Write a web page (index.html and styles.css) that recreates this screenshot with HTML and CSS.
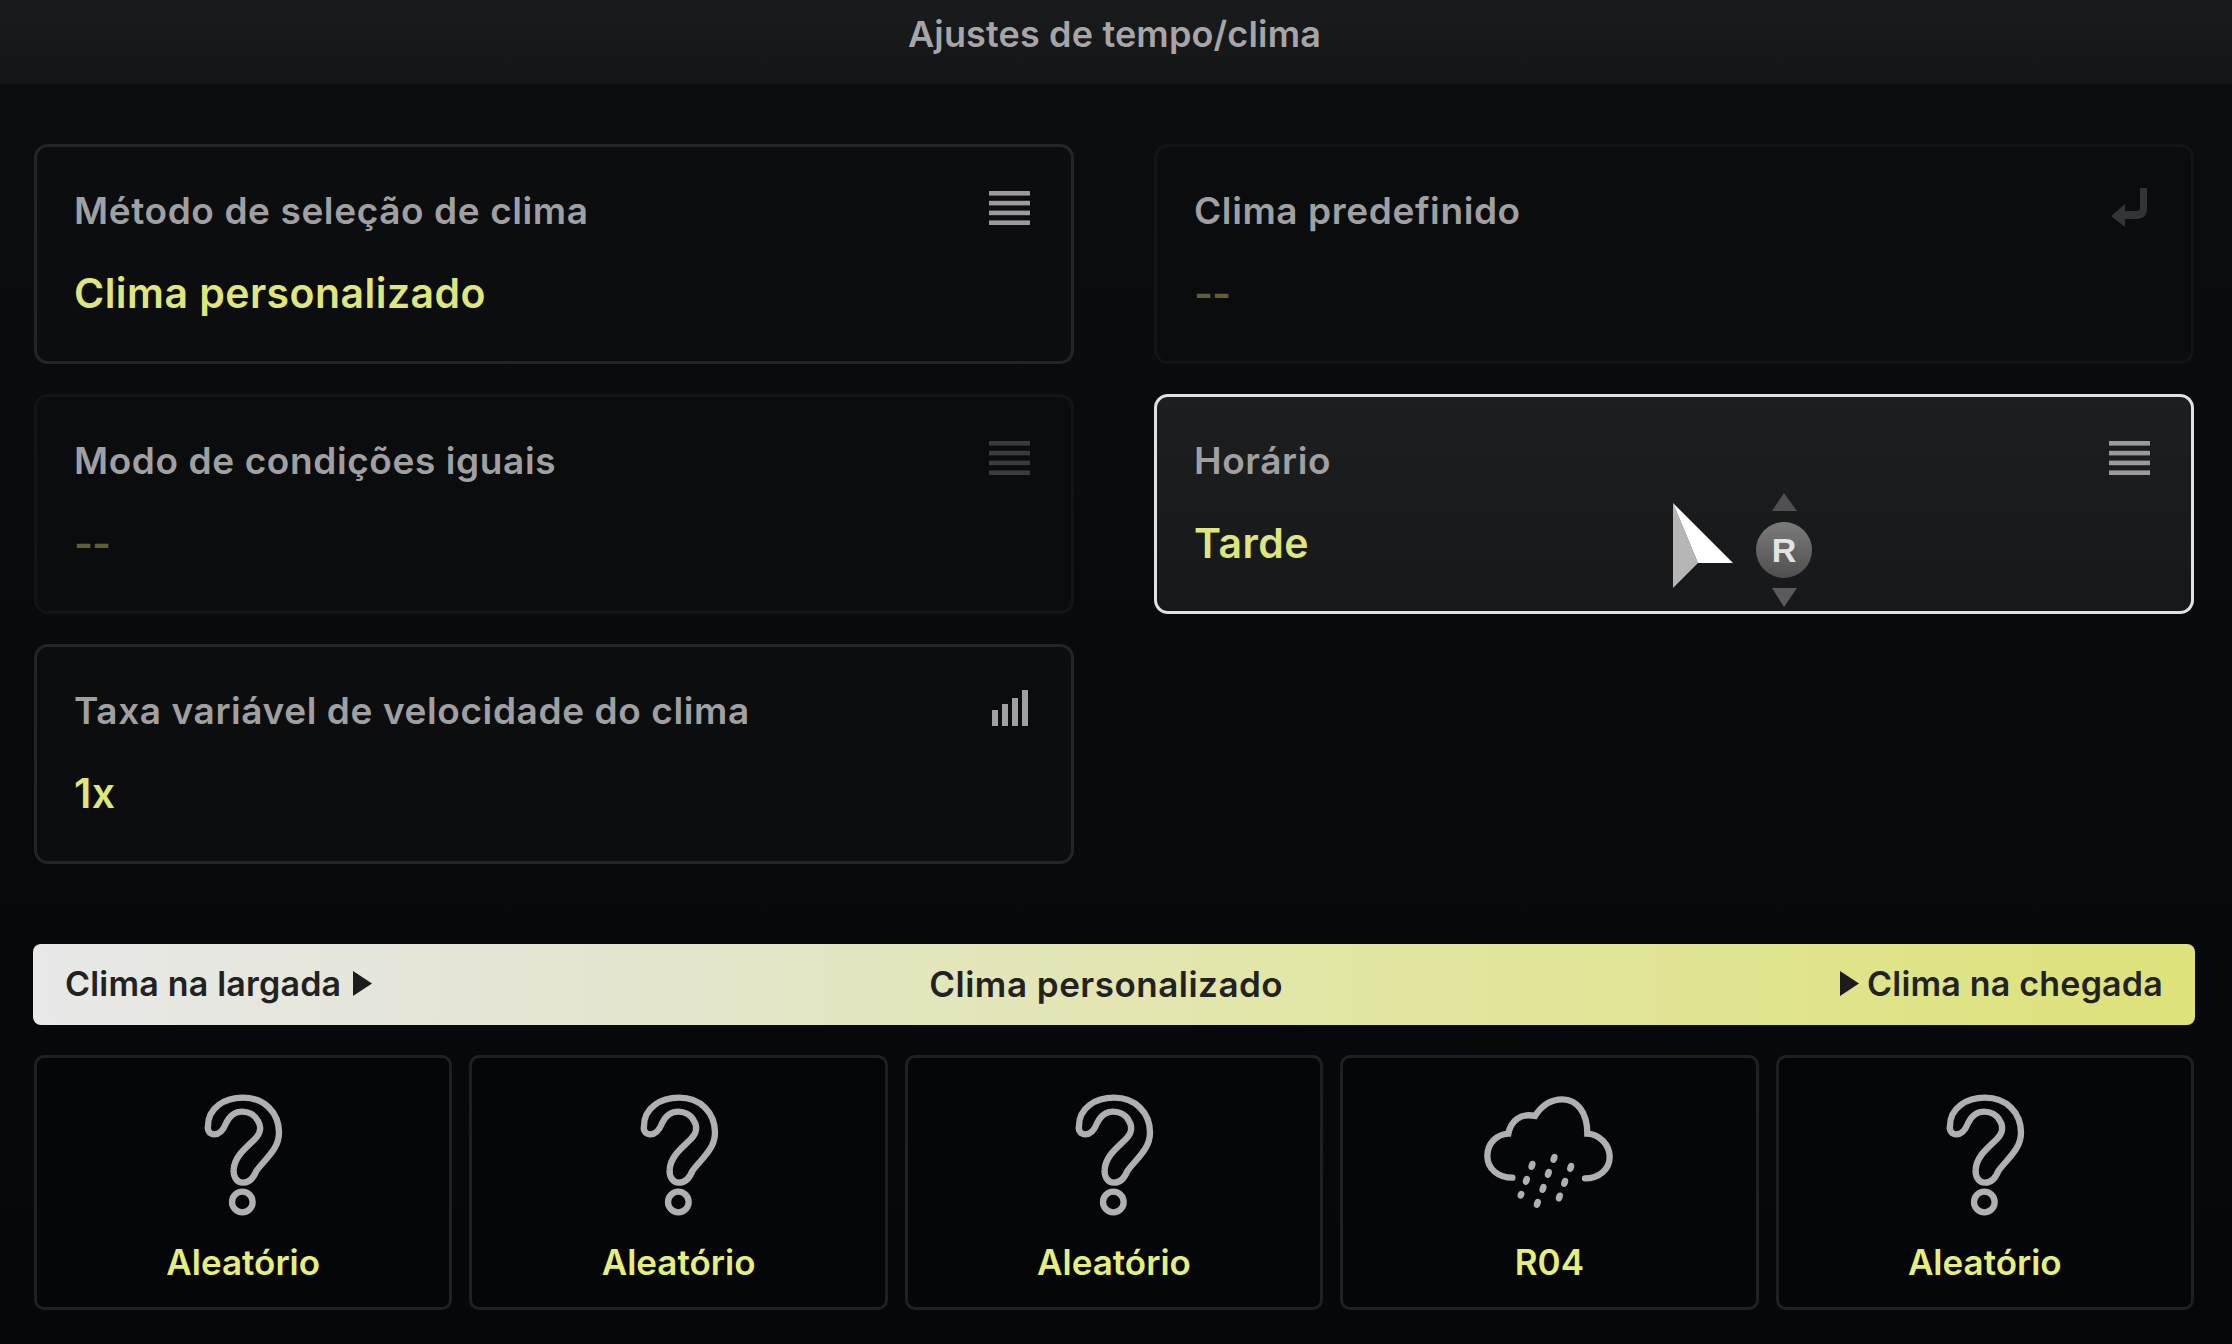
FILE: index.html
```html
<!DOCTYPE html>
<html lang="pt">
<head>
  <meta charset="UTF-8" />
  <title>Ajustes de tempo/clima</title>
  <link rel="stylesheet" href="styles.css">
</head>
<body>
  <svg class="defs" width="0" height="0">
    <symbol id="icon-list" viewBox="0 0 41 34">
      <rect x="0" y="0" width="41" height="4.6" />
      <rect x="0" y="9.8" width="41" height="4.6" />
      <rect x="0" y="19.6" width="41" height="4.6" />
      <rect x="0" y="29.4" width="41" height="4.6" />
    </symbol>
    <symbol id="icon-question" viewBox="-20 0 600 480">
      <path class="outline" d="M175 165C175 110 225 80 280 80C345 80 388 125 388 185C388 235 345 265 320 300C310 325 295 335 280 335C260 335 250 315 252 295C255 255 290 230 315 205C335 185 335 165 325 150C315 130 295 122 278 122C255 122 240 135 230 155C222 175 210 190 195 190C180 190 172 178 175 165Z" />
      <circle class="outline" cx="278" cy="393" r="31" />
    </symbol>
    <symbol id="icon-rain" viewBox="0 0 600 480">
      <path class="outline" d="M190 320C150 320 115 295 115 255C115 215 145 190 178 188C185 150 215 125 258 135C280 100 310 85 340 85C385 85 415 125 415 188C450 190 482 220 482 258C482 295 450 322 408 322" />
      <g class="drops">
        <ellipse cx="249" cy="283" rx="10" ry="14" transform="rotate(20 249 283)" />
        <ellipse cx="315" cy="262" rx="10" ry="14" transform="rotate(20 315 262)" />
        <ellipse cx="365" cy="289" rx="10" ry="14" transform="rotate(20 365 289)" />
        <ellipse cx="298" cy="307" rx="10" ry="14" transform="rotate(20 298 307)" />
        <ellipse cx="232" cy="328" rx="10" ry="14" transform="rotate(20 232 328)" />
        <ellipse cx="347" cy="334" rx="10" ry="14" transform="rotate(20 347 334)" />
        <ellipse cx="282" cy="352" rx="10" ry="14" transform="rotate(20 282 352)" />
        <ellipse cx="216" cy="371" rx="10" ry="12" transform="rotate(20 216 371)" />
        <ellipse cx="331" cy="378" rx="10" ry="14" transform="rotate(20 331 378)" />
        <ellipse cx="265" cy="397" rx="10" ry="14" transform="rotate(20 265 397)" />
      </g>
    </symbol>
  </svg>

  <header class="title-bar">Ajustes de tempo/clima</header>

  <main class="settings">
    <div class="setting">
      <div class="setting-head">
        <span class="setting-label">Método de seleção de clima</span>
        <svg class="icon-list"><use href="#icon-list" /></svg>
      </div>
      <div class="setting-value">Clima personalizado</div>
    </div>

    <div class="setting off">
      <div class="setting-head">
        <span class="setting-label">Clima predefinido</span>
        <svg class="icon-return" viewBox="0 0 36 39"><path d="M29 0h7v20q0 11-11 11H14v8L0 28 14 16v7h12q3 0 3-3z" /></svg>
      </div>
      <div class="setting-value">--</div>
    </div>

    <div class="setting off">
      <div class="setting-head">
        <span class="setting-label">Modo de condições iguais</span>
        <svg class="icon-list"><use href="#icon-list" /></svg>
      </div>
      <div class="setting-value">--</div>
    </div>

    <div class="setting focus">
      <div class="setting-head">
        <span class="setting-label">Horário</span>
        <svg class="icon-list"><use href="#icon-list" /></svg>
      </div>
      <div class="setting-value">Tarde</div>

      <svg class="pointer" viewBox="0 0 145 120" width="145" height="120">
        <polygon class="pointer-shade" points="4,10 29,70 4,95" />
        <polygon class="pointer-light" points="4,10 64,70 29,70" />
        <polygon class="arrow-up" points="103,18 115,0 128,18" />
        <polygon class="arrow-down" points="103,95 128,95 115,114" />
        <defs>
          <linearGradient id="badge" x1="0" y1="0" x2="0" y2="1">
            <stop offset="0" stop-color="#7c7c7c" />
            <stop offset="1" stop-color="#4f4f4f" />
          </linearGradient>
        </defs>
        <circle cx="115" cy="57" r="28" fill="url(#badge)" />
        <text class="pointer-key" x="115" y="69" text-anchor="middle">R</text>
      </svg>
    </div>

    <div class="setting">
      <div class="setting-head">
        <span class="setting-label">Taxa variável de velocidade do clima</span>
        <svg class="icon-bars" viewBox="0 0 36 36"><path d="M0 20h6v16H0zM10 14h6v22h-6zM20 8h6v28h-6zM30 0h6v36h-6z" /></svg>
      </div>
      <div class="setting-value">1x</div>
    </div>
  </main>

  <div class="timeline">
    <span class="timeline-end start">Clima na largada<svg class="tri" viewBox="0 0 19 25"><polygon points="0,0 19,12.5 0,25" /></svg></span>
    <span>Clima personalizado</span>
    <span class="timeline-end finish"><svg class="tri" viewBox="0 0 19 25"><polygon points="0,0 19,12.5 0,25" /></svg>Clima na chegada</span>
  </div>

  <section class="slots">
    <div class="slot"><svg class="slot-icon"><use href="#icon-question" /></svg><span>Aleatório</span></div>
    <div class="slot"><svg class="slot-icon"><use href="#icon-question" /></svg><span>Aleatório</span></div>
    <div class="slot"><svg class="slot-icon"><use href="#icon-question" /></svg><span>Aleatório</span></div>
    <div class="slot"><svg class="slot-icon"><use href="#icon-rain" /></svg><span>R04</span></div>
    <div class="slot"><svg class="slot-icon"><use href="#icon-question" /></svg><span>Aleatório</span></div>
  </section>
</body>
</html>
```

FILE: styles.css
```css
html, body {
  margin: 0;
  padding: 0;
  height: 100%;
}

body {
  width: 2232px;
  height: 1344px;
  overflow: hidden;
  background: linear-gradient(#0c0d0f, #06070a);
  font-family: Inter, "Liberation Sans", sans-serif;
  color: #a0a0a3;
}

.defs {
  position: absolute;
}

.title-bar {
  box-sizing: border-box;
  height: 84px;
  padding-right: 3px;
  line-height: 68px;
  text-align: center;
  font-size: 36px;
  font-weight: 600;
  letter-spacing: 0.15px;
  background: linear-gradient(#1a1b1d, #141517);
  color: #a6a6a8;
}

.settings {
  display: grid;
  grid-template-columns: 1040px 1040px;
  grid-auto-rows: 220px;
  column-gap: 80px;
  row-gap: 30px;
  padding: 60px 0 0 34px;
}

.setting {
  position: relative;
  box-sizing: border-box;
  padding: 43px 41px 0 37px;
  border: 3px solid #242528;
  border-radius: 14px;
  background: #0c0d0f;
}

.setting-head {
  display: flex;
  justify-content: space-between;
  align-items: flex-start;
  height: 60px;
}

.setting-label {
  font-size: 37px;
  line-height: 42px;
  font-weight: 600;
  letter-spacing: 0.6px;
}

.setting-value {
  margin-top: 20px;
  font-size: 41px;
  line-height: 46px;
  font-weight: 600;
  letter-spacing: 0.45px;
  color: #dfe67c;
}

.icon-list {
  width: 41px;
  height: 34px;
  margin-top: 1px;
  fill: #9b9b9e;
}

.icon-return {
  width: 36px;
  height: 39px;
  margin: -2px 3px 0 0;
  fill: #333436;
}

.icon-bars {
  width: 36px;
  height: 36px;
  margin: 0 2px 0 0;
  fill: #a0a0a2;
}

.off {
  border-color: #131416;
  background: #0b0c0e;
}

.off .setting-value {
  letter-spacing: -1px;
  color: #5d6036;
}

.off .icon-list {
  fill: #3a3b3d;
}

.focus {
  border-color: #e2e2e2;
  background: linear-gradient(#1d1e20, #17181a);
}

.pointer {
  position: absolute;
  left: 512px;
  top: 96px;
}

.pointer-shade {
  fill: #b6b6b6;
}

.pointer-light {
  fill: #fff;
}

.arrow-up {
  fill: #505052;
}

.arrow-down {
  fill: #5a5a5c;
}

.pointer-key {
  font-family: "Liberation Sans", sans-serif;
  font-size: 34px;
  font-weight: 700;
  fill: #e4e4e4;
}

.timeline {
  display: flex;
  justify-content: space-between;
  align-items: center;
  box-sizing: border-box;
  width: 2162px;
  height: 81px;
  margin: 80px 0 0 33px;
  padding: 0 32px 2px;
  border-radius: 8px;
  background: linear-gradient(90deg, #e8e8e8, #e4e5d2 25%, #e2e6a4 60%, #dde27a);
  color: #222;
  font-size: 35px;
  font-weight: 600;
  letter-spacing: 0.5px;
}

.timeline-end {
  display: flex;
  align-items: center;
  font-size: 34px;
  letter-spacing: 0.2px;
}

.start {
  gap: 12px;
}

.finish {
  gap: 8px;
}

.tri {
  width: 19px;
  height: 25px;
  fill: #1c1c1c;
}

.slots {
  display: grid;
  grid-template-columns: repeat(5, 1fr);
  gap: 17px;
  margin: 30px 38px 0 34px;
}

.slot {
  display: flex;
  flex-direction: column;
  align-items: center;
  box-sizing: border-box;
  height: 255px;
  padding-top: 13px;
  border: 3px solid #1f2022;
  border-radius: 10px;
  background: #050608;
  color: #e6ef7c;
  font-size: 35px;
  line-height: 40px;
  font-weight: 600;
}

.slot-icon {
  width: 200px;
  height: 160px;
  margin-bottom: 11px;
}

.outline {
  fill: none;
  stroke: #b0b0b2;
  stroke-width: 19;
  stroke-linecap: round;
}

.drops {
  fill: #b0b0b2;
}
```
